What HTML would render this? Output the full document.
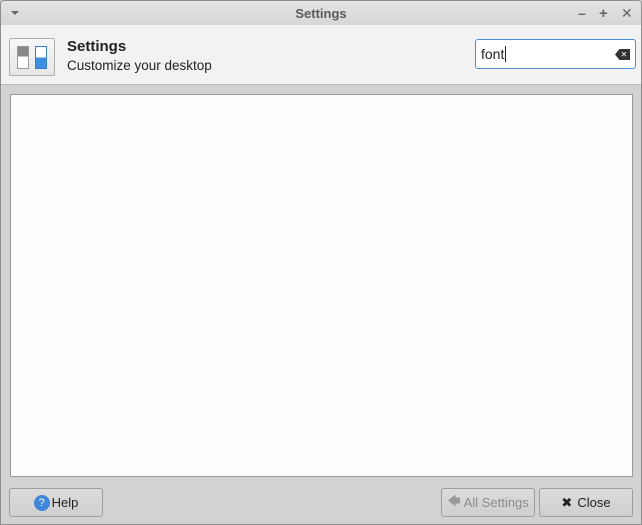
<!DOCTYPE html>
<html><head><style>
body{margin:0;width:642px;height:525px;overflow:hidden;font-family:"Liberation Sans","DejaVu Sans",sans-serif;background:#cfcfcf;position:relative}
.win{position:absolute;left:0;top:0;width:640px;height:523px;border:1px solid #8e8e8e;border-radius:4px 4px 0 0;background:#d2d2d2;overflow:hidden}
.title{position:absolute;left:0;top:0;width:640px;height:24px;background:linear-gradient(#e4e4e4,#d6d6d6);text-align:center;font-size:13px;font-weight:bold;color:#5a5a5a;line-height:25px}
.hdr{position:absolute;left:0;top:24px;width:640px;height:59px;background:#f2f2f2;border-bottom:1px solid #b8b8b8}
.panel{position:absolute;left:9px;top:93px;width:621px;height:381px;background:#fdfdfd;border:1px solid #9a9a9a}
.btn{position:absolute;top:487px;height:29px;border:1px solid #9e9e9e;border-radius:3px;background:linear-gradient(#dcdcdc,#cfcfcf);font-size:13px;color:#222;box-sizing:border-box;display:flex;align-items:center;justify-content:center}
</style></head><body>
<div class="win">
<div class="title">Settings
<span style="position:absolute;left:10px;top:10px;border-left:4px solid transparent;border-right:4px solid transparent;border-top:4px solid #666"></span>
<span style="position:absolute;left:577px;top:0;font-size:14px;color:#666">–</span>
<span style="position:absolute;left:598px;top:0;font-size:15px;color:#666">+</span>
<span style="position:absolute;left:620px;top:0;font-size:14px;color:#666">✕</span>
</div>
<div class="hdr">
<div style="position:absolute;left:8px;top:13px;width:44px;height:36px;border:1px solid #b0b0b0;border-radius:2px;background:linear-gradient(#f8f8f8,#e6e6e6)">
<div style="position:absolute;left:7px;top:7px;width:10px;height:21px;border:1px solid #999;background:linear-gradient(#888 0 45%,#fff 45%)"></div>
<div style="position:absolute;left:25px;top:7px;width:10px;height:21px;border:1px solid #3a7fd0;background:linear-gradient(#fff 0 50%,#3d8fe0 50%)"></div>
</div>
<div style="position:absolute;left:66px;top:13px;font-size:15px;font-weight:bold;color:#222">Settings</div>
<div style="position:absolute;left:66px;top:33px;font-size:13.5px;color:#222">Customize your desktop</div>
<div style="position:absolute;left:474px;top:14px;width:161px;height:30px;box-sizing:border-box;border:1px solid #4a90d9;border-radius:3px;background:#fff;font-size:14px;line-height:28px;padding-left:5px;color:#222">font<span style="border-left:1px solid #222;margin-left:1px"></span>
<span style="position:absolute;right:5px;top:9px;width:15px;height:11px;background:#333;clip-path:polygon(30% 0,100% 0,100% 100%,30% 100%,0 50%);color:#fff;font-size:8px;line-height:11px;text-align:center;padding-left:3px;box-sizing:border-box">✕</span></div>
</div>
<div class="panel"></div>
<div class="btn" style="left:8px;width:94px"><span style="display:inline-block;width:16px;height:16px;border-radius:50%;background:#3f86d8;color:#fff;font-size:11px;line-height:16px;text-align:center;margin-right:2px">?</span>Help</div>
<div class="btn" style="left:440px;width:94px;color:#8a8a8a"><span style="color:#999;margin-right:3px">🡄</span>All Settings</div>
<div class="btn" style="left:538px;width:94px"><span style="margin-right:5px">✖</span>Close</div>
</div>
</body></html>
